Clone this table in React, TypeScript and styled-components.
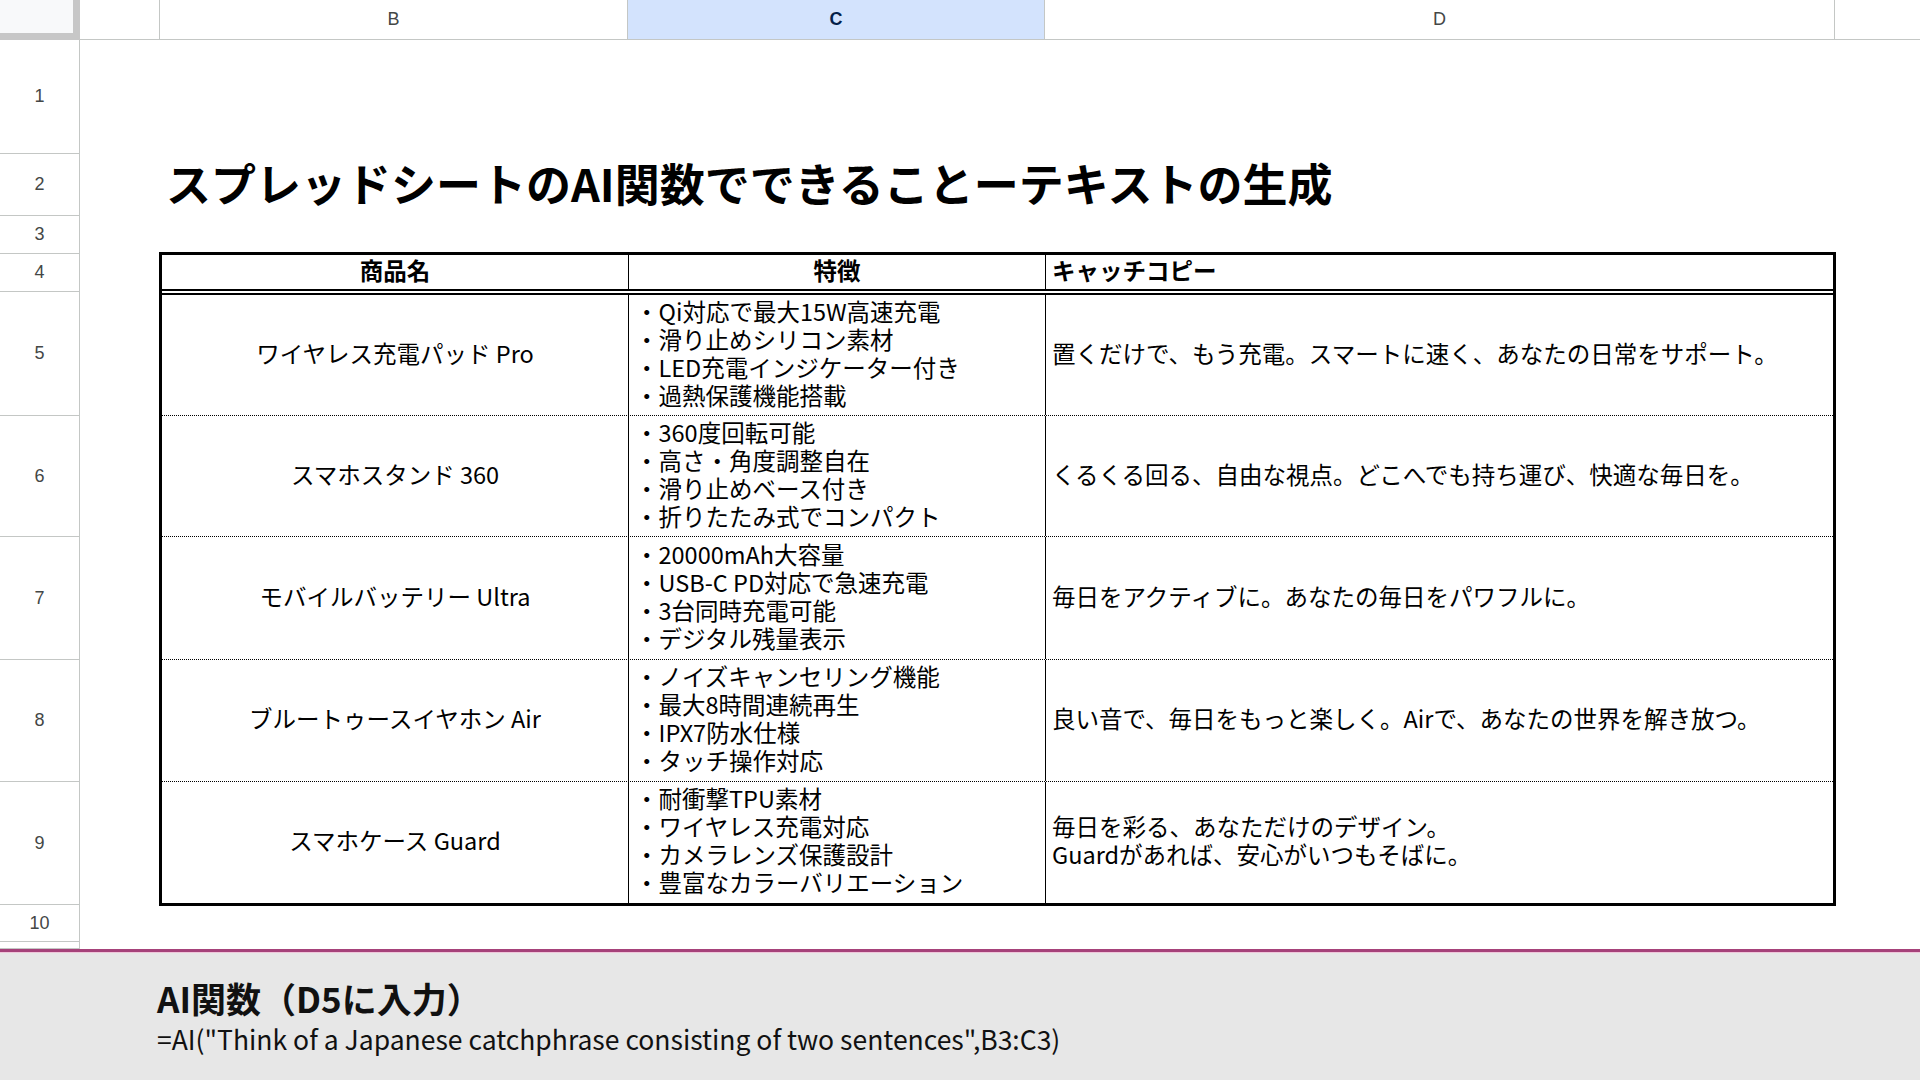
import React from "react";
import styled, { createGlobalStyle } from "styled-components";

const GlobalStyle = createGlobalStyle`
  html, body {
    margin: 0;
    padding: 0;
    width: 1920px;
    height: 1080px;
    overflow: hidden;
    background: #ffffff;
  }
  body {
    font-family: "Noto Sans CJK JP", "Noto Sans", sans-serif;
    color: #000;
  }
  * { box-sizing: border-box; }
`;

const Page = styled.div`
  display: flex;
  flex-direction: column;
  width: 1920px;
  height: 1080px;
`;

const Sheet = styled.div`
  flex: none;
  display: grid;
  grid-template-columns: 80px 80px 468px 417px 790px 1fr;
  grid-template-rows: 40px 114px 62px 38px 38px 124px 121px 123px 122px 123px 37px 7px;
  background: #ffffff;
`;

const Corner = styled.div`
  grid-column: 1;
  grid-row: 1;
  background: #f8f9fa;
  border-right: 7px solid #c7c7c7;
  border-bottom: 7px solid #c7c7c7;
`;

const ColHead = styled.div<{ $col: number; $active?: boolean; $last?: boolean }>`
  grid-row: 1;
  grid-column: ${(p) => p.$col};
  display: flex;
  align-items: center;
  justify-content: center;
  background: ${(p) => (p.$active ? "#d3e3fd" : "#ffffff")};
  color: ${(p) => (p.$active ? "#041e49" : "#444746")};
  font-weight: ${(p) => (p.$active ? 700 : 400)};
  font-family: "Liberation Sans", Arial, sans-serif;
  font-size: 18px;
  border-right: ${(p) => (p.$last ? "none" : "1px solid #c4c7c5")};
  border-bottom: 1px solid #c4c7c5;
`;

const RowHead = styled.div<{ $row: number }>`
  grid-column: 1;
  grid-row: ${(p) => p.$row};
  display: flex;
  align-items: center;
  justify-content: center;
  font-family: "Liberation Sans", Arial, sans-serif;
  font-size: 18px;
  color: #444746;
  background: #ffffff;
  border-right: 1px solid #c4c7c5;
  border-bottom: 1px solid #c4c7c5;
`;

const Title = styled.h1`
  grid-column: 3 / 7;
  grid-row: 3;
  margin: 0;
  padding: 0 0 5px 6px;
  display: flex;
  align-items: center;
  font-size: 45px;
  font-weight: 700;
  white-space: nowrap;
  letter-spacing: 0;
  color: #000;
`;

const Table = styled.div`
  grid-column: 3 / 6;
  grid-row: 5 / 12;
  align-self: start;
  margin: -2px -1px 0 -1px;
  height: 654px;
  border: 3px solid #000;
  display: flex;
  flex-direction: column;
  background: #fff;
`;

const TableRow = styled.div<{ $h: number; $kind: "head" | "body" | "last" }>`
  flex: none;
  height: ${(p) => p.$h}px;
  display: grid;
  grid-template-columns: 466px 417px 1fr;
  border-bottom: ${(p) =>
    p.$kind === "head" ? "6px double #000" : p.$kind === "body" ? "1px dotted #000" : "none"};
`;

const Cell = styled.div<{ $align?: "center" | "left"; $divider?: boolean; $bold?: boolean }>`
  display: flex;
  align-items: center;
  justify-content: ${(p) => (p.$align === "center" ? "center" : "flex-start")};
  text-align: ${(p) => (p.$align === "center" ? "center" : "left")};
  padding: 0 6px 5px 6px;
  border-left: ${(p) => (p.$divider ? "1px solid #000" : "none")};
  font-size: 23.5px;
  line-height: 28px;
  font-weight: ${(p) => (p.$bold ? 700 : 400)};
  white-space: nowrap;
`;

const Lines = styled.div`
  display: flex;
  flex-direction: column;
`;

const Line = styled.span`
  display: block;
  line-height: 28px;
`;

const Divider = styled.div`
  flex: none;
  height: 4px;
  background: #a6427a;
  border-bottom: 1px solid #efc6da;
`;

const Panel = styled.div`
  flex: 1;
  background: #e7e7e7;
  padding: 25px 0 0 157px;
  display: flex;
  flex-direction: column;
  color: #111;
`;

const PanelTitle = styled.div`
  font-size: 35px;
  font-weight: 700;
  line-height: 40px;
  white-space: nowrap;
`;

const Formula = styled.div`
  font-size: 26.5px;
  line-height: 42px;
  white-space: nowrap;
`;

type Product = {
  name: string;
  features: string[];
  copy: string[];
  h: number;
};

const products: Product[] = [
  {
    name: "ワイヤレス充電パッド Pro",
    features: [
      "・Qi対応で最大15W高速充電",
      "・滑り止めシリコン素材",
      "・LED充電インジケーター付き",
      "・過熱保護機能搭載",
    ],
    copy: ["置くだけで、もう充電。スマートに速く、あなたの日常をサポート。"],
    h: 121,
  },
  {
    name: "スマホスタンド 360",
    features: ["・360度回転可能", "・高さ・角度調整自在", "・滑り止めベース付き", "・折りたたみ式でコンパクト"],
    copy: ["くるくる回る、自由な視点。どこへでも持ち運び、快適な毎日を。"],
    h: 121,
  },
  {
    name: "モバイルバッテリー Ultra",
    features: ["・20000mAh大容量", "・USB-C PD対応で急速充電", "・3台同時充電可能", "・デジタル残量表示"],
    copy: ["毎日をアクティブに。あなたの毎日をパワフルに。"],
    h: 123,
  },
  {
    name: "ブルートゥースイヤホン Air",
    features: ["・ノイズキャンセリング機能", "・最大8時間連続再生", "・IPX7防水仕様", "・タッチ操作対応"],
    copy: ["良い音で、毎日をもっと楽しく。Airで、あなたの世界を解き放つ。"],
    h: 122,
  },
  {
    name: "スマホケース Guard",
    features: ["・耐衝撃TPU素材", "・ワイヤレス充電対応", "・カメラレンズ保護設計", "・豊富なカラーバリエーション"],
    copy: ["毎日を彩る、あなただけのデザイン。", "Guardがあれば、安心がいつもそばに。"],
    h: 121,
  },
];

const columns = [
  { col: 2, label: "" },
  { col: 3, label: "B" },
  { col: 4, label: "C", active: true },
  { col: 5, label: "D" },
  { col: 6, label: "", last: true },
];

const rowNumbers = ["1", "2", "3", "4", "5", "6", "7", "8", "9", "10", ""];

export default function App() {
  return (
    <>
      <GlobalStyle />
      <Page>
        <Sheet>
          <Corner />
          {columns.map((c) => (
            <ColHead key={c.col} $col={c.col} $active={c.active} $last={c.last}>
              {c.label}
            </ColHead>
          ))}
          {rowNumbers.map((n, i) => (
            <RowHead key={i} $row={i + 2}>
              {n}
            </RowHead>
          ))}
          <Title>スプレッドシートのAI関数でできることーテキストの生成</Title>
          <Table>
            <TableRow $h={40} $kind="head">
              <Cell $align="center" $bold>
                商品名
              </Cell>
              <Cell $align="center" $bold $divider>
                特徴
              </Cell>
              <Cell $align="left" $bold $divider>
                キャッチコピー
              </Cell>
            </TableRow>
            {products.map((p, i) => (
              <TableRow key={p.name} $h={p.h} $kind={i === products.length - 1 ? "last" : "body"}>
                <Cell $align="center">{p.name}</Cell>
                <Cell $align="left" $divider>
                  <Lines>
                    {p.features.map((f) => (
                      <Line key={f}>{f}</Line>
                    ))}
                  </Lines>
                </Cell>
                <Cell $align="left" $divider>
                  <Lines>
                    {p.copy.map((c) => (
                      <Line key={c}>{c}</Line>
                    ))}
                  </Lines>
                </Cell>
              </TableRow>
            ))}
          </Table>
        </Sheet>
        <Divider />
        <Panel>
          <PanelTitle>AI関数（D5に入力）</PanelTitle>
          <Formula>=AI("Think of a Japanese catchphrase consisting of two sentences",B3:C3)</Formula>
        </Panel>
      </Page>
    </>
  );
}
